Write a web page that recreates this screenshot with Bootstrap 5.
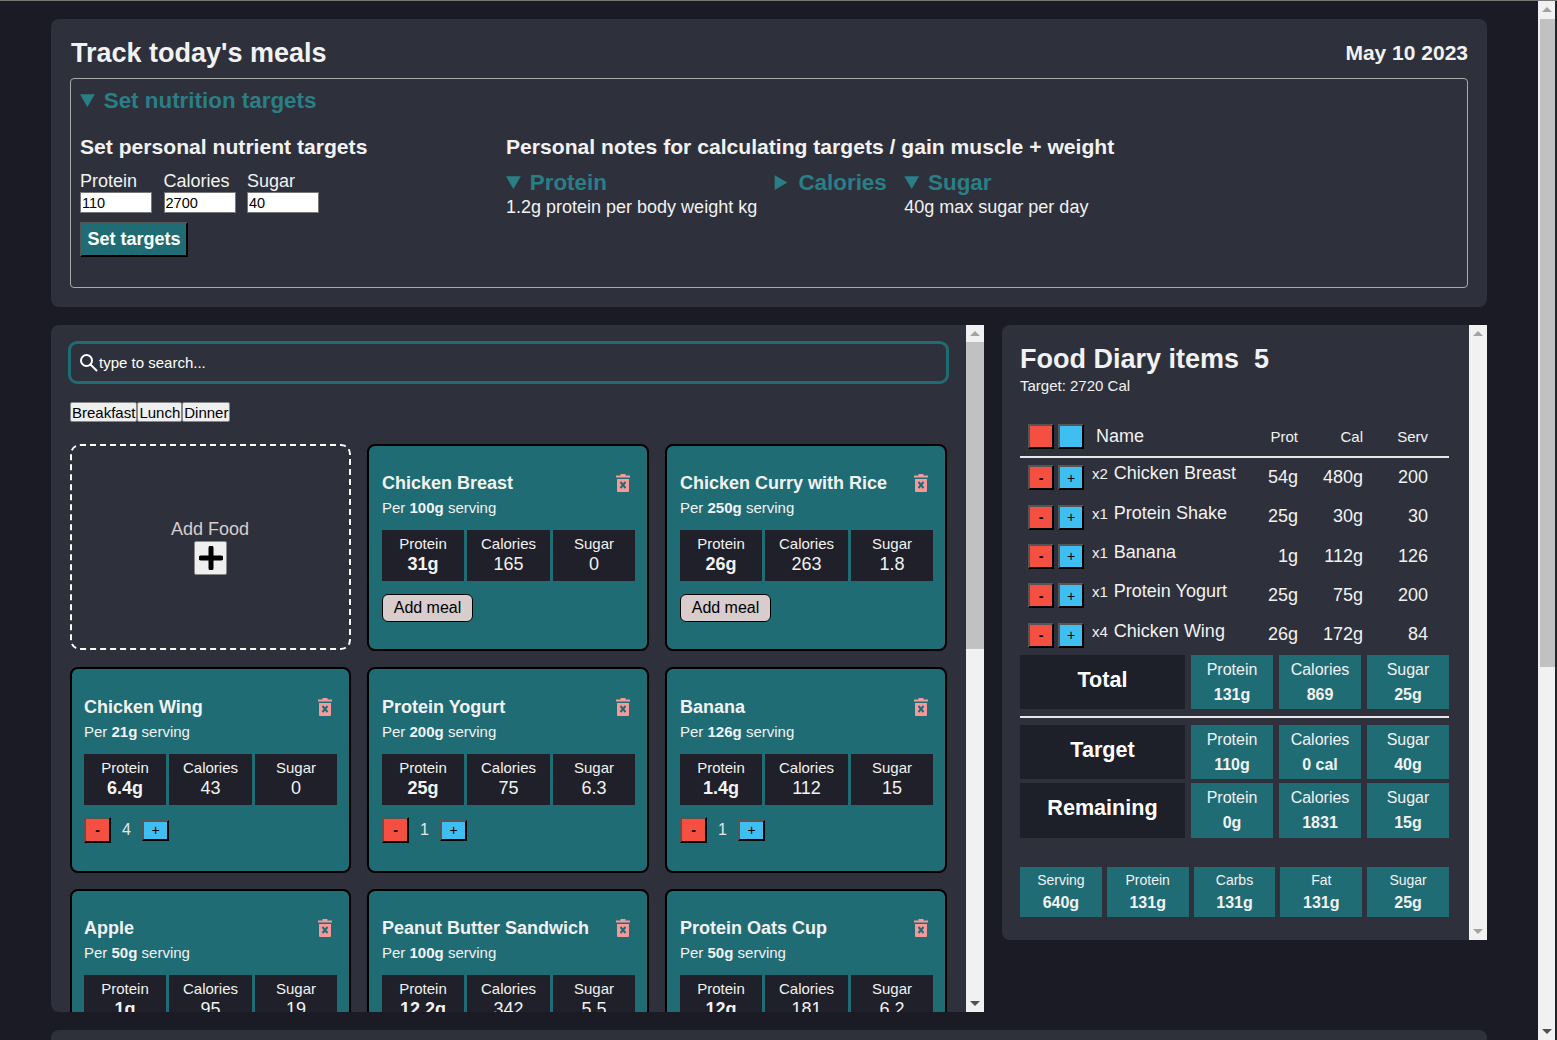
<!DOCTYPE html>
<html lang="en">
<head>
  <meta charset="UTF-8">
  <title>Track today's meals</title>
  <link href="https://cdn.jsdelivr.net/npm/bootstrap@5.3.0/dist/css/bootstrap.min.css" rel="stylesheet">
  <style>
    html, body { height: 100%; overflow: hidden; }
    body {
      background: #1a1b25;
      color: #f2f2f2;
      font-family: "Liberation Sans", Arial, sans-serif;
      font-size: 16px;
      line-height: 1.2;
      border-top: 1px solid #777;
    }
    .page-wrap { height: 1039px; }
    .page-main { width: 1538px; padding: 18px 51px 0; overflow: hidden; }
    .panel-bg { background: #2e313b; border-radius: 8px; }
    .top-panel { height: 288px; padding: 18px 19px 0; }
    .top-title { font-size: 27px; font-weight: 700; line-height: 32px; margin: 0 0 0 1px; }
    .top-date { font-size: 21px; font-weight: 700; line-height: 32px; margin: 0; }
    .targets-box { height: 210px; margin-top: 9px; border: 1px solid #aaa; border-radius: 4px; padding: 8px 9px; }
    summary { color: #2a7f87; font-size: 22.4px; font-weight: 700; line-height: 28px; cursor: pointer; }
    .sub-head { font-size: 21.12px; font-weight: 700; line-height: 26px; margin: 0; }
    .set-col { width: 426px; }
    .set-body { margin-top: 19px; }
    .field-row { margin-top: 11px; }
    .field-name { font-size: 18px; line-height: 21px; margin-right: 11.5px; }
    .field-input { display: block; width: 72px; height: 21px; padding: 0 1px; border: 1px solid #777; border-radius: 0; font-size: 14.5px; line-height: 19px; font-family: inherit; color: #000; background: #fff; }
    .set-btn { margin-top: 9px; width: 108px; height: 35px; padding: 0; background: #206c75; color: #fff; font-size: 18px; font-weight: 700; border: 2px solid; border-color: #555 #000 #000 #555; }
    .note-row { margin-top: 9px; gap: 17.5px; }
    .note-row summary { line-height: 27px; }
    .note-text { font-size: 18px; line-height: 22px; }

    .lower-row { margin-top: 18px; gap: 18px; }
    .food-wrap { height: 687px; width: 933px; }
    .food-panel { width: 915px; padding: 16px 17px 0; overflow: hidden; border-radius: 8px 0 0 8px; }
    .search-box { height: 43px; border: 3px solid #206c75; border-radius: 9px; padding: 0 8px; gap: 1px; font-size: 15px; color: #fff; }
    .tag-row { margin: 18px 0 22px 2px; }
    .tag-btn { height: 20px; padding: 0 1px; border: 1px solid #888; border-radius: 2px; background: #efefef; color: #000; font-size: 15px; line-height: 17px; }
    .food-grid { display: grid; grid-template-columns: 281px 282px 282px; grid-template-rows: 207px 206px 206px; gap: 16px; margin: 0 2px; }
    .add-food { height: 206px; border: 2px dashed #fff; border-radius: 10px; color: #d8cccc; font-size: 18px; }
    .add-label { margin-left: -1px; }
    .plus-btn { width: 33px; height: 34px; padding: 0; background: #efefef; border: 1px solid #888; border-radius: 2px; }
    .food-card { background: #206c75; border: 2px solid #000; border-radius: 8px; padding: 26px 12px 0 13px; color: #f2f2f2; }
    .food-grid > .food-card:nth-child(3n+1) { padding-left: 12px; }
    .qty-card { padding-top: 27px; }
    .food-name { font-size: 18px; font-weight: 700; line-height: 22px; margin: 0; }
    .trash-ico { margin-right: 5px; flex: none; }
    .food-per { font-size: 15px; line-height: 18px; margin-top: 5px; }
    .stat-three { display: grid; grid-template-columns: repeat(3, 1fr); gap: 3.4px; margin-top: 13px; }
    .stat-dark { height: 51px; background: #1f2029; text-align: center; font-size: 15px; padding-top: 5px; line-height: 18px; }
    .stat-dark strong, .stat-dark span { display: block; font-size: 18px; line-height: 22px; }
    .meal-btn { margin-top: 13px; width: 91px; height: 28px; padding: 0; background: #d8cccc; border: 1px solid #000; border-radius: 6px; color: #000; font-size: 16px; }
    .bevel { padding: 0; border: 2px solid; border-color: #555 #000 #000 #555; color: #000; font-size: 14px; line-height: 1; }
    .minus-col { background: #f44f41; font-weight: 700; }
    .plus-col { background: #3fbef2; }
    .qty-row { margin-top: 12px; }
    .qty-row .minus-col { width: 27px; height: 26px; }
    .qty-row .plus-col { width: 27px; height: 21px; }
    .qty-num { width: 31px; text-align: center; font-size: 16px; color: #e6e6e6; }

    .fake-bar { background: #f1f1f1; }
    .bar-side { width: 18px; }
    .bar-body { width: 17px; height: 1039px; }
    .arrow-up { width: 0; height: 0; border: 5px solid transparent; border-top: 0; border-bottom: 5px solid #a3a3a3; margin: 6px auto 0; flex: none; }
    .arrow-dn { width: 0; height: 0; border: 5px solid transparent; border-bottom: 0; border-top: 5px solid #a3a3a3; margin: auto auto 6px; flex: none; }
    .arrow-dn.dark { border-top-color: #505050; }
    .thumb-inner { background: #c1c1c1; height: 307px; margin-top: 6px; flex: none; }
    .thumb-page { background: #c1c1c1; height: 648px; margin: 7px 0 0 2px; flex: none; }
    .edge-right { width: 2px; background: #22252c; }

    .diary-wrap { height: 615px; width: 485px; }
    .diary-panel { width: 467px; padding: 18px 20px 0 18px; border-radius: 8px 0 0 8px; }
    .diary-title { font-size: 27px; font-weight: 700; line-height: 32px; margin: 0; white-space: pre; }
    .diary-sub { font-size: 15px; line-height: 18px; margin-top: 2px; }
    .diary-head { height: 42px; margin-top: 21px; padding-left: 8px; border-bottom: 2px solid #e8e8e8; }
    .diary-line { height: 39.4px; padding-left: 8px; }
    .bevel-pair { gap: 4px; width: 56px; flex: none; }
    .bevel-pair .bevel { width: 26px; height: 25px; }
    .name-cell { width: 158px; flex: none; padding-left: 8px; font-size: 18px; line-height: 22px; margin-top: -8px; white-space: nowrap; }
    .name-cell small { font-size: 15px; margin-right: 1px; }
    .num-cell { text-align: right; font-size: 18px; flex: none; }
    .col-prot { width: 56px; }
    .col-cal { width: 65px; }
    .col-serv { width: 65px; }
    .head-name { width: 158px; flex: none; padding: 2px 0 0 12px; font-size: 18px; }
    .head-num { font-size: 15px; padding-top: 2px; }
    .sum-row { display: grid; grid-template-columns: 165px 82px 82px 82px; gap: 6px; height: 54px; }
    .sum-row-next { margin-top: 4px; height: 55px; }
    .sum-label { background: #1d2029; color: #fff; font-size: 21.6px; font-weight: 700; text-align: center; line-height: 50px; }
    .sum-box { background: #206c75; text-align: center; font-size: 16px; padding-top: 5px; line-height: 19px; }
    .sum-box strong { display: block; margin-top: 6px; }
    .sum-rule { height: 2px; background: #e8e8e8; margin: 7px 0; }
    .macro-row { display: grid; grid-template-columns: repeat(5, 1fr); gap: 5px; margin-top: 29px; }
    .macro-box { height: 50px; background: #206c75; text-align: center; font-size: 14px; padding-top: 5px; line-height: 17px; }
    .macro-box strong { display: block; font-size: 16px; line-height: 22px; margin-top: 3px; }
    .bottom-peek { height: 20px; margin-top: 18px; }
  </style>
</head>
<body>
  <div class="page-wrap d-flex">
    <div class="page-main">

      <section class="top-panel panel-bg">
        <div class="d-flex justify-content-between align-items-center">
          <h1 class="top-title">Track today's meals</h1>
          <p class="top-date">May 10 2023</p>
        </div>
        <div class="targets-box">
          <details open>
            <summary>Set nutrition targets</summary>
            <div class="d-flex set-body">
              <div class="set-col">
                <h2 class="sub-head">Set personal nutrient targets</h2>
                <div class="d-flex field-row">
                  <label class="field-name">Protein<input class="field-input" value="110"></label>
                  <label class="field-name">Calories<input class="field-input" value="2700"></label>
                  <label class="field-name">Sugar<input class="field-input" value="40"></label>
                </div>
                <button class="set-btn" type="button">Set targets</button>
              </div>
              <div>
                <h2 class="sub-head">Personal notes for calculating targets / gain muscle + weight</h2>
                <div class="note-row d-flex align-items-start">
                  <details open>
                    <summary>Protein</summary>
                    <div class="note-text">1.2g protein per body weight kg</div>
                  </details>
                  <details>
                    <summary>Calories</summary>
                  </details>
                  <details open>
                    <summary>Sugar</summary>
                    <div class="note-text">40g max sugar per day</div>
                  </details>
                </div>
              </div>
            </div>
          </details>
        </div>
      </section>

      <div class="lower-row d-flex align-items-start">
        <div class="food-wrap d-flex">
          <section class="food-panel panel-bg">
            <div class="search-box d-flex align-items-center">
              <svg width="19" height="19" viewBox="0 0 19 19" fill="none" stroke="#fff" stroke-width="2"><circle cx="7.5" cy="7.5" r="5.5"/><path d="M11.5 11.5L17.5 17.5" stroke-linecap="round"/></svg>
              <span>type to search...</span>
            </div>
            <div class="tag-row d-flex">
              <button class="tag-btn" type="button">Breakfast</button>
              <button class="tag-btn" type="button">Lunch</button>
              <button class="tag-btn" type="button">Dinner</button>
            </div>
            <div class="food-grid">
              <div class="add-food d-flex flex-column align-items-center justify-content-center">
                <span class="add-label">Add Food</span>
                <button class="plus-btn d-flex align-items-center justify-content-center" type="button" aria-label="Add food">
                  <svg width="24" height="24" viewBox="0 0 24 24"><path d="M12 2V22M2 12H22" stroke="#000" stroke-width="5" stroke-linecap="round"/></svg>
                </button>
              </div>

              <div class="card food-card">
                <div class="d-flex justify-content-between align-items-center"><h3 class="food-name">Chicken Breast</h3><svg class="trash-ico" width="14" height="18" viewBox="0 0 14 18"><path fill="#f59a9a" d="M4.500 0h5v1.500H14v2H0v-2h4.500zM1 5h12v12a1 1 0 0 1-1 1H2a1 1 0 0 1-1-1z"/><path d="M4.500 8l5 6m0-6l-5 6" stroke="#206c75" stroke-width="2"/></svg></div>
                <div class="food-per">Per <strong>100g</strong> serving</div>
                <div class="stat-three">
                  <div class="stat-dark">Protein<strong>31g</strong></div>
                  <div class="stat-dark">Calories<span>165</span></div>
                  <div class="stat-dark">Sugar<span>0</span></div>
                </div>
                <div><button class="meal-btn" type="button">Add meal</button></div>
              </div>

              <div class="card food-card">
                <div class="d-flex justify-content-between align-items-center"><h3 class="food-name">Chicken Curry with Rice</h3><svg class="trash-ico" width="14" height="18" viewBox="0 0 14 18"><path fill="#f59a9a" d="M4.500 0h5v1.500H14v2H0v-2h4.500zM1 5h12v12a1 1 0 0 1-1 1H2a1 1 0 0 1-1-1z"/><path d="M4.500 8l5 6m0-6l-5 6" stroke="#206c75" stroke-width="2"/></svg></div>
                <div class="food-per">Per <strong>250g</strong> serving</div>
                <div class="stat-three">
                  <div class="stat-dark">Protein<strong>26g</strong></div>
                  <div class="stat-dark">Calories<span>263</span></div>
                  <div class="stat-dark">Sugar<span>1.8</span></div>
                </div>
                <div><button class="meal-btn" type="button">Add meal</button></div>
              </div>

              <div class="card food-card qty-card">
                <div class="d-flex justify-content-between align-items-center"><h3 class="food-name">Chicken Wing</h3><svg class="trash-ico" width="14" height="18" viewBox="0 0 14 18"><path fill="#f59a9a" d="M4.500 0h5v1.500H14v2H0v-2h4.500zM1 5h12v12a1 1 0 0 1-1 1H2a1 1 0 0 1-1-1z"/><path d="M4.500 8l5 6m0-6l-5 6" stroke="#206c75" stroke-width="2"/></svg></div>
                <div class="food-per">Per <strong>21g</strong> serving</div>
                <div class="stat-three">
                  <div class="stat-dark">Protein<strong>6.4g</strong></div>
                  <div class="stat-dark">Calories<span>43</span></div>
                  <div class="stat-dark">Sugar<span>0</span></div>
                </div>
                <div class="qty-row d-flex align-items-center">
                  <button class="bevel minus-col" type="button">-</button><span class="qty-num">4</span><button class="bevel plus-col" type="button">+</button>
                </div>
              </div>

              <div class="card food-card qty-card">
                <div class="d-flex justify-content-between align-items-center"><h3 class="food-name">Protein Yogurt</h3><svg class="trash-ico" width="14" height="18" viewBox="0 0 14 18"><path fill="#f59a9a" d="M4.500 0h5v1.500H14v2H0v-2h4.500zM1 5h12v12a1 1 0 0 1-1 1H2a1 1 0 0 1-1-1z"/><path d="M4.500 8l5 6m0-6l-5 6" stroke="#206c75" stroke-width="2"/></svg></div>
                <div class="food-per">Per <strong>200g</strong> serving</div>
                <div class="stat-three">
                  <div class="stat-dark">Protein<strong>25g</strong></div>
                  <div class="stat-dark">Calories<span>75</span></div>
                  <div class="stat-dark">Sugar<span>6.3</span></div>
                </div>
                <div class="qty-row d-flex align-items-center">
                  <button class="bevel minus-col" type="button">-</button><span class="qty-num">1</span><button class="bevel plus-col" type="button">+</button>
                </div>
              </div>

              <div class="card food-card qty-card">
                <div class="d-flex justify-content-between align-items-center"><h3 class="food-name">Banana</h3><svg class="trash-ico" width="14" height="18" viewBox="0 0 14 18"><path fill="#f59a9a" d="M4.500 0h5v1.500H14v2H0v-2h4.500zM1 5h12v12a1 1 0 0 1-1 1H2a1 1 0 0 1-1-1z"/><path d="M4.500 8l5 6m0-6l-5 6" stroke="#206c75" stroke-width="2"/></svg></div>
                <div class="food-per">Per <strong>126g</strong> serving</div>
                <div class="stat-three">
                  <div class="stat-dark">Protein<strong>1.4g</strong></div>
                  <div class="stat-dark">Calories<span>112</span></div>
                  <div class="stat-dark">Sugar<span>15</span></div>
                </div>
                <div class="qty-row d-flex align-items-center">
                  <button class="bevel minus-col" type="button">-</button><span class="qty-num">1</span><button class="bevel plus-col" type="button">+</button>
                </div>
              </div>

              <div class="card food-card">
                <div class="d-flex justify-content-between align-items-center"><h3 class="food-name">Apple</h3><svg class="trash-ico" width="14" height="18" viewBox="0 0 14 18"><path fill="#f59a9a" d="M4.500 0h5v1.500H14v2H0v-2h4.500zM1 5h12v12a1 1 0 0 1-1 1H2a1 1 0 0 1-1-1z"/><path d="M4.500 8l5 6m0-6l-5 6" stroke="#206c75" stroke-width="2"/></svg></div>
                <div class="food-per">Per <strong>50g</strong> serving</div>
                <div class="stat-three">
                  <div class="stat-dark">Protein<strong>1g</strong></div>
                  <div class="stat-dark">Calories<span>95</span></div>
                  <div class="stat-dark">Sugar<span>19</span></div>
                </div>
              </div>

              <div class="card food-card">
                <div class="d-flex justify-content-between align-items-center"><h3 class="food-name">Peanut Butter Sandwich</h3><svg class="trash-ico" width="14" height="18" viewBox="0 0 14 18"><path fill="#f59a9a" d="M4.500 0h5v1.500H14v2H0v-2h4.500zM1 5h12v12a1 1 0 0 1-1 1H2a1 1 0 0 1-1-1z"/><path d="M4.500 8l5 6m0-6l-5 6" stroke="#206c75" stroke-width="2"/></svg></div>
                <div class="food-per">Per <strong>100g</strong> serving</div>
                <div class="stat-three">
                  <div class="stat-dark">Protein<strong>12.2g</strong></div>
                  <div class="stat-dark">Calories<span>342</span></div>
                  <div class="stat-dark">Sugar<span>5.5</span></div>
                </div>
              </div>

              <div class="card food-card">
                <div class="d-flex justify-content-between align-items-center"><h3 class="food-name">Protein Oats Cup</h3><svg class="trash-ico" width="14" height="18" viewBox="0 0 14 18"><path fill="#f59a9a" d="M4.500 0h5v1.500H14v2H0v-2h4.500zM1 5h12v12a1 1 0 0 1-1 1H2a1 1 0 0 1-1-1z"/><path d="M4.500 8l5 6m0-6l-5 6" stroke="#206c75" stroke-width="2"/></svg></div>
                <div class="food-per">Per <strong>50g</strong> serving</div>
                <div class="stat-three">
                  <div class="stat-dark">Protein<strong>12g</strong></div>
                  <div class="stat-dark">Calories<span>181</span></div>
                  <div class="stat-dark">Sugar<span>6.2</span></div>
                </div>
              </div>
            </div>
          </section>
          <div class="fake-bar bar-side d-flex flex-column">
            <div class="arrow-up"></div>
            <div class="thumb-inner"></div>
            <div class="arrow-dn dark"></div>
          </div>
        </div>

        <div class="diary-wrap d-flex">
          <section class="diary-panel panel-bg">
            <h2 class="diary-title">Food Diary items  5</h2>
            <div class="diary-sub">Target: 2720 Cal</div>

            <div class="diary-head d-flex align-items-center">
              <div class="bevel-pair d-flex"><button class="bevel minus-col" type="button" aria-label="Remove all"></button><button class="bevel plus-col" type="button" aria-label="Add all"></button></div>
              <div class="head-name">Name</div>
              <div class="num-cell head-num col-prot">Prot</div>
              <div class="num-cell head-num col-cal">Cal</div>
              <div class="num-cell head-num col-serv">Serv</div>
            </div>

            <div class="diary-line d-flex align-items-center">
              <div class="bevel-pair d-flex"><button class="bevel minus-col" type="button">-</button><button class="bevel plus-col" type="button">+</button></div>
              <div class="name-cell"><small>x2</small> Chicken Breast</div>
              <div class="num-cell col-prot">54g</div><div class="num-cell col-cal">480g</div><div class="num-cell col-serv">200</div>
            </div>
            <div class="diary-line d-flex align-items-center">
              <div class="bevel-pair d-flex"><button class="bevel minus-col" type="button">-</button><button class="bevel plus-col" type="button">+</button></div>
              <div class="name-cell"><small>x1</small> Protein Shake</div>
              <div class="num-cell col-prot">25g</div><div class="num-cell col-cal">30g</div><div class="num-cell col-serv">30</div>
            </div>
            <div class="diary-line d-flex align-items-center">
              <div class="bevel-pair d-flex"><button class="bevel minus-col" type="button">-</button><button class="bevel plus-col" type="button">+</button></div>
              <div class="name-cell"><small>x1</small> Banana</div>
              <div class="num-cell col-prot">1g</div><div class="num-cell col-cal">112g</div><div class="num-cell col-serv">126</div>
            </div>
            <div class="diary-line d-flex align-items-center">
              <div class="bevel-pair d-flex"><button class="bevel minus-col" type="button">-</button><button class="bevel plus-col" type="button">+</button></div>
              <div class="name-cell"><small>x1</small> Protein Yogurt</div>
              <div class="num-cell col-prot">25g</div><div class="num-cell col-cal">75g</div><div class="num-cell col-serv">200</div>
            </div>
            <div class="diary-line d-flex align-items-center">
              <div class="bevel-pair d-flex"><button class="bevel minus-col" type="button">-</button><button class="bevel plus-col" type="button">+</button></div>
              <div class="name-cell"><small>x4</small> Chicken Wing</div>
              <div class="num-cell col-prot">26g</div><div class="num-cell col-cal">172g</div><div class="num-cell col-serv">84</div>
            </div>

            <div class="sum-row">
              <div class="sum-label">Total</div>
              <div class="sum-box">Protein<strong>131g</strong></div>
              <div class="sum-box">Calories<strong>869</strong></div>
              <div class="sum-box">Sugar<strong>25g</strong></div>
            </div>
            <div class="sum-rule"></div>
            <div class="sum-row">
              <div class="sum-label">Target</div>
              <div class="sum-box">Protein<strong>110g</strong></div>
              <div class="sum-box">Calories<strong>0 cal</strong></div>
              <div class="sum-box">Sugar<strong>40g</strong></div>
            </div>
            <div class="sum-row sum-row-next">
              <div class="sum-label">Remaining</div>
              <div class="sum-box">Protein<strong>0g</strong></div>
              <div class="sum-box">Calories<strong>1831</strong></div>
              <div class="sum-box">Sugar<strong>15g</strong></div>
            </div>

            <div class="macro-row">
              <div class="macro-box">Serving<strong>640g</strong></div>
              <div class="macro-box">Protein<strong>131g</strong></div>
              <div class="macro-box">Carbs<strong>131g</strong></div>
              <div class="macro-box">Fat<strong>131g</strong></div>
              <div class="macro-box">Sugar<strong>25g</strong></div>
            </div>
          </section>
          <div class="fake-bar bar-side d-flex flex-column">
            <div class="arrow-up"></div>
            <div class="arrow-dn"></div>
          </div>
        </div>
      </div>

      <div class="bottom-peek panel-bg"></div>
    </div>

    <div class="fake-bar bar-body d-flex flex-column">
      <div class="arrow-up"></div>
      <div class="thumb-page"></div>
      <div class="arrow-dn dark"></div>
    </div>
    <div class="edge-right"></div>
  </div>
  <script src="https://cdn.jsdelivr.net/npm/bootstrap@5.3.0/dist/js/bootstrap.bundle.min.js"></script>
</body>
</html>
